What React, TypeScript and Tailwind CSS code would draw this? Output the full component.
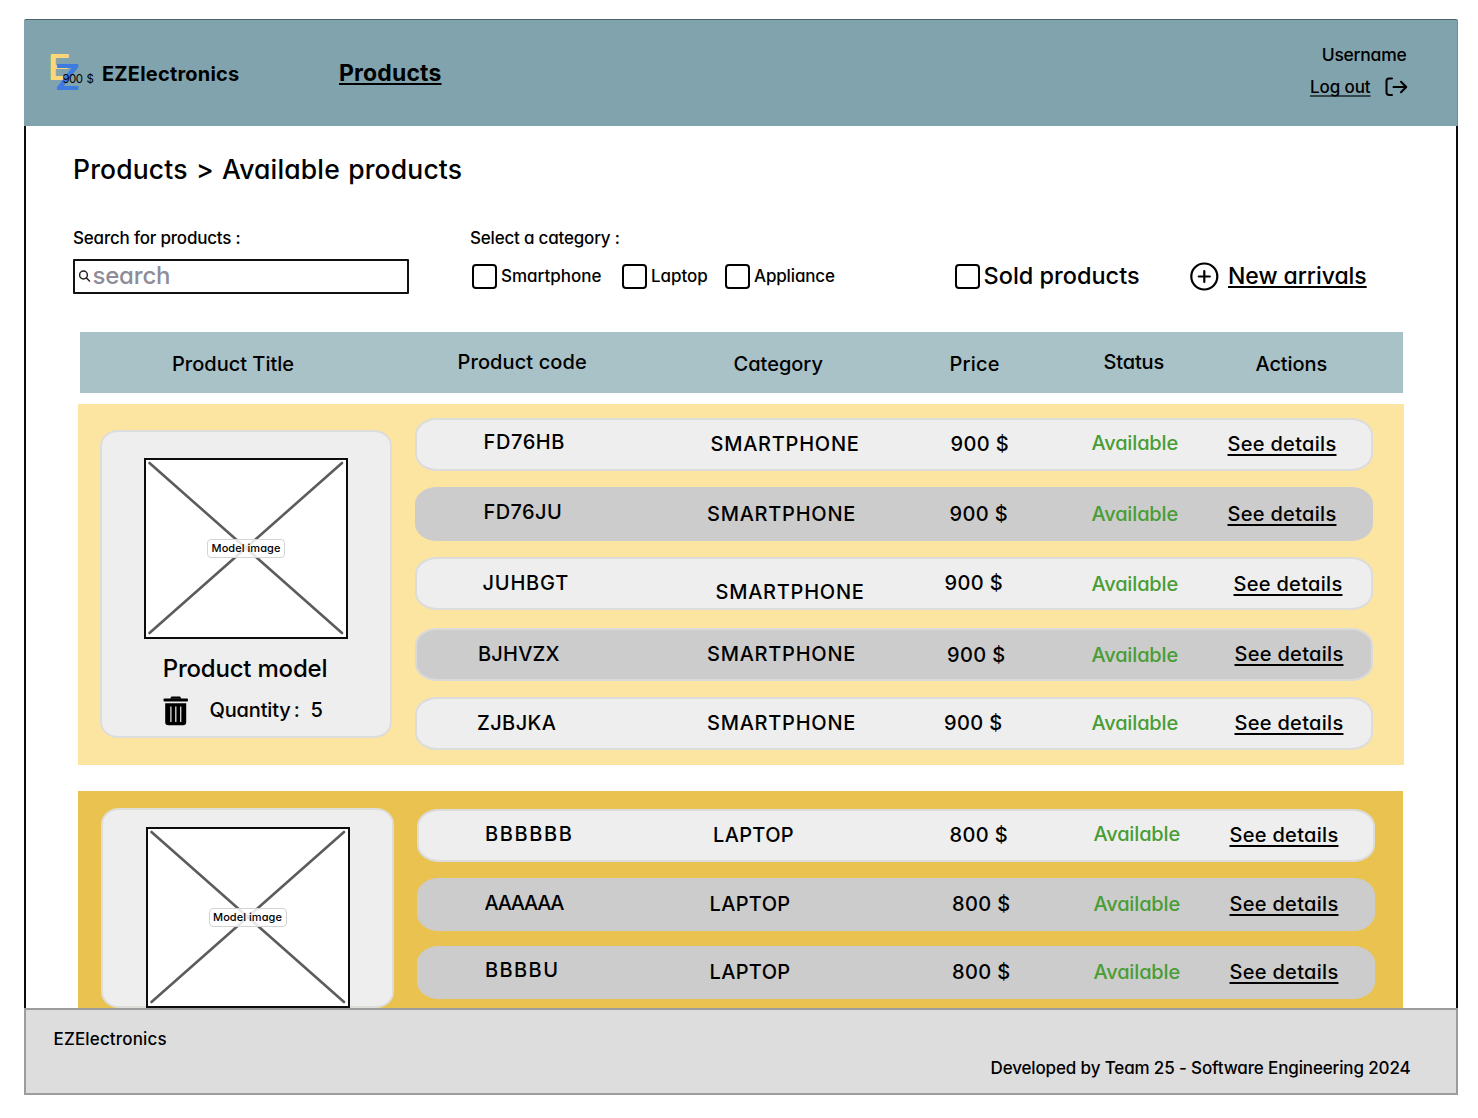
import React from "react";

type Cell = { text: string; cls: string };
type RowData = { box: string; cells: Cell[] };

const LIGHT = "bg-[#eeeeee] border-[#dcdcdc]";
const DARK = "bg-[#cccccc] border-[#cccccc]";
const DARK_EDGE = "bg-[#cccccc] border-[#dadad8]";

const COLUMNS = [
  "w-[230px]",
  "w-[234px]",
  "w-[149px]",
  "w-[136px]",
  "w-[138px]",
];

const STYLES = [
  "",
  "",
  "tracking-[0.4px]",
  "text-[#489d35] tracking-[-0.15px]",
  "underline decoration-2 underline-offset-[2.5px] [text-decoration-skip-ink:none] tracking-[0.3px]",
];

const PHONE = "SMARTPHONE";
const phoneRows: RowData[] = [
  {
    box: `${LIGHT} h-[53px] mb-[16px]`,
    cells: [
      { text: "FD76HB", cls: "pl-[7px] pt-[10px] tracking-[0.6px]" },
      { text: PHONE, cls: "pl-[4px] pt-[12px] tracking-[0.75px]" },
      { text: "900 $", cls: "pl-[10px] pt-[12px]" },
      { text: "Available", cls: "pl-[2px] pt-[10.5px]" },
      { text: "See details", cls: "pl-[2px] pt-[12px]" },
    ],
  },
  {
    box: `${DARK} h-[54px] mb-[16px]`,
    cells: [
      { text: "FD76JU", cls: "pl-[7px] pt-[10.5px] tracking-[0.4px]" },
      { text: PHONE, cls: "pl-[0.5px] pt-[12.5px] tracking-[0.75px]" },
      { text: "900 $", cls: "pl-[9px] pt-[12.5px]" },
      { text: "Available", cls: "pl-[2px] pt-[12.5px]" },
      { text: "See details", cls: "pl-[2px] pt-[12.5px]" },
    ],
  },
  {
    box: `${LIGHT} h-[53px] mb-[18px]`,
    cells: [
      { text: "JUHBGT", cls: "pl-[6px] pt-[12px] tracking-[0.8px]" },
      { text: PHONE, cls: "pl-[9px] pt-[21px] tracking-[0.75px]" },
      { text: "900 $", cls: "pl-[4px] pt-[12px]" },
      { text: "Available", cls: "pl-[2px] pt-[12.5px]" },
      { text: "See details", cls: "pl-[8px] pt-[12.5px]" },
    ],
  },
  {
    box: `${DARK_EDGE} h-[53px] mb-[16px]`,
    cells: [
      { text: "BJHVZX", cls: "pl-[1.5px] pt-[12px] tracking-[0.2px]" },
      { text: PHONE, cls: "pl-[0.5px] pt-[12px] tracking-[0.75px]" },
      { text: "900 $", cls: "pl-[6.5px] pt-[13px]" },
      { text: "Available", cls: "pl-[2px] pt-[13px]" },
      { text: "See details", cls: "pl-[9px] pt-[12px]" },
    ],
  },
  {
    box: `${LIGHT} h-[53px]`,
    cells: [
      { text: "ZJBJKA", cls: "pl-[0.5px] pt-[12px] tracking-[0.4px]" },
      { text: PHONE, cls: "pl-[0.5px] pt-[12px] tracking-[0.75px]" },
      { text: "900 $", cls: "pl-[3.5px] pt-[12px]" },
      { text: "Available", cls: "pl-[2px] pt-[12px]" },
      { text: "See details", cls: "pl-[9px] pt-[12px]" },
    ],
  },
];

const laptopRows: RowData[] = [
  {
    box: `${LIGHT} h-[53px] mb-[16px]`,
    cells: [
      { text: "BBBBBB", cls: "pl-[6.5px] pt-[11px] tracking-[1.6px]" },
      { text: "LAPTOP", cls: "pl-[4.5px] pt-[12px] tracking-[0.35px]" },
      { text: "800 $", cls: "pl-[7px] pt-[12px]" },
      { text: "Available", cls: "pl-[2px] pt-[11px]" },
      { text: "See details", cls: "pl-[2px] pt-[12.5px]" },
    ],
  },
  {
    box: `${DARK} h-[53px] mb-[15px]`,
    cells: [
      { text: "AAAAAA", cls: "pl-[6px] pt-[11px] tracking-[-1.3px]" },
      { text: "LAPTOP", cls: "pl-[1px] pt-[12.5px] tracking-[0.35px]" },
      { text: "800 $", cls: "pl-[9.5px] pt-[12.5px]" },
      { text: "Available", cls: "pl-[2px] pt-[12.5px]" },
      { text: "See details", cls: "pl-[2px] pt-[12.5px]" },
    ],
  },
  {
    box: `${DARK} h-[53px]`,
    cells: [
      { text: "BBBBU", cls: "pl-[6.5px] pt-[10px] tracking-[1.4px]" },
      { text: "LAPTOP", cls: "pl-[1px] pt-[12px] tracking-[0.35px]" },
      { text: "800 $", cls: "pl-[9.5px] pt-[12px]" },
      { text: "Available", cls: "pl-[2px] pt-[12px]" },
      { text: "See details", cls: "pl-[2px] pt-[12px]" },
    ],
  },
];

function Row({ row }: { row: RowData }) {
  return (
    <div
      className={`flex w-[957.5px] items-start rounded-[22px/17px] border-2 pl-[59.5px] text-[20px] leading-[24px] ${row.box}`}
    >
      {row.cells.map((c, i) => (
        <div key={i} className={`shrink-0 ${COLUMNS[i]} ${c.cls}`}>
          <span className={STYLES[i]}>{c.text}</span>
        </div>
      ))}
    </div>
  );
}

function ModelImage() {
  return (
    <div className="relative flex h-[181px] w-[204px] shrink-0 items-center justify-center border-2 border-[#0c0c0c] bg-white">
      <svg className="absolute inset-0 h-full w-full" viewBox="0 0 200 177" fill="none" stroke="#5c5c5c" strokeWidth="2.6" strokeLinecap="round">
        <path d="M3.5 3 196 173M196 3 3.5 173" />
      </svg>
      <span className="relative flex h-[19px] w-[78px] items-center justify-center rounded-[4px] border border-[#d4d4d4] bg-white/85 text-[11px] font-medium tracking-[0.05px]">
        Model image
      </span>
    </div>
  );
}

function Check({ label, cls, text }: { label: string; cls: string; text: string }) {
  return (
    <label className={`flex shrink-0 items-center ${cls}`}>
      <span className="h-[25px] w-[25px] shrink-0 rounded-[4px] border-[2.5px] border-black bg-white" />
      <span className={text}>{label}</span>
    </label>
  );
}

export default function App() {
  return (
    <div className="h-[1118px] w-[1478px] overflow-hidden bg-white pl-[24px] pt-[19px] font-['Inter','Liberation_Sans',sans-serif] font-[450] whitespace-nowrap text-black [font-feature-settings:'cv11']">
      <div className="flex h-[1076px] w-[1434px] flex-col">
        <header className="flex h-[107px] shrink-0 items-start rounded-t-[2px] border-t border-r border-t-[#4c646a] border-r-[#6d8c94] bg-[#80a3ad]">
          <div className="relative ml-[24px] mt-[30px] h-[44px] w-[54px] shrink-0">
            <svg className="overflow-visible" width="54" height="44" viewBox="0 0 54 44" strokeLinejoin="round" fontFamily="Inter" fontSize="32" fontWeight="350">
              <text x="0.3" y="28.5" textLength="22" lengthAdjust="spacingAndGlyphs" fill="#fbd77a" stroke="#fbd77a" strokeWidth="2">E</text>
              <text x="7.5" y="39" textLength="24" lengthAdjust="spacingAndGlyphs" fill="#3d7be0" stroke="#3d7be0" strokeWidth="2">Z</text>
            </svg>
            <span className="absolute left-[14.5px] top-[21px] text-[11.5px] font-normal leading-[16px] tracking-[-0.6px] [word-spacing:1.5px]">900 $</span>
          </div>
          <div className="mt-[42px] w-[237px] text-[20px] font-bold leading-[24px] tracking-[0.2px]">EZElectronics</div>
          <a className="mt-[38.5px] text-[23px] font-bold leading-[28px] tracking-[0.15px] underline decoration-2 underline-offset-[2px] [text-decoration-skip-ink:none]">
            Products
          </a>
          <div className="ml-auto mr-[49.5px] mt-[23px] flex flex-col items-end">
            <span className="mr-[1px] text-[17.5px] leading-[24px] tracking-[-0.25px]">Username</span>
            <div className="mt-[8px] flex items-center">
              <span className="text-[17px] leading-[24px] tracking-[-0.1px] underline decoration-[#33444a] decoration-[1.5px] underline-offset-[2px] [text-decoration-skip-ink:none]">Log out</span>
              <svg className="ml-[14px]" width="23" height="20" viewBox="0 0 23 20" fill="none" stroke="black" strokeWidth="2" strokeLinecap="round" strokeLinejoin="round">
                <path d="M7 1.5H4.2Q1.5 1.5 1.5 4.2V15.3Q1.5 18 4.2 18H7M8.5 10H21M16 4.8 21.3 10 16 15.2" />
              </svg>
            </div>
          </div>
        </header>

        <main className="h-[882px] shrink-0 overflow-hidden border-x-2 border-[#0c0c0c]">
          <h1 className="ml-[47px] mt-[27px] text-[26.5px] leading-[32px] tracking-[0.16px] [word-spacing:1px]">Products &gt; Available products</h1>

          <div className="mt-[43px] flex h-[20px] text-[17px] leading-[20px]">
            <span className="ml-[47px] w-[397px] tracking-[-0.2px]">Search for products :</span>
            <span className="tracking-[-0.2px]">Select a category :</span>
          </div>

          <div className="mt-[10px] flex h-[36px] items-center">
            <div className="ml-[47px] flex h-[35px] w-[336px] shrink-0 items-center rounded-[1px] border-2 border-[#111] pl-[4px]">
              <svg width="12" height="12" viewBox="0 0 12 12" fill="none" stroke="#222" strokeWidth="1.5" strokeLinecap="round">
                <circle cx="4.5" cy="5" r="3.9" />
                <path d="m7.5 8 3 3" />
              </svg>
              <span className="ml-[1.5px] text-[24px] leading-[28px] tracking-[-0.2px] text-[#8e8c97]">search</span>
            </div>
            <Check label="Smartphone" cls="ml-[63px] w-[150px]" text="ml-[4px] mt-[1px] text-[17px]" />
            <Check label="Laptop" cls="w-[103px]" text="ml-[4px] mt-[1px] text-[17px] tracking-[-0.05px]" />
            <Check label="Appliance" cls="w-[230px]" text="ml-[4px] mt-[1px] text-[17px] tracking-[-0.15px]" />
            <Check label="Sold products" cls="w-[235px]" text="ml-[3.5px] text-[23.5px]" />
            <svg className="shrink-0" width="29" height="29" viewBox="0 0 29 29" fill="none" stroke="black" strokeWidth="2.2" strokeLinecap="round">
              <circle cx="14.3" cy="14.5" r="13" />
              <path d="M14.3 9v11M8.8 14.5h11" />
            </svg>
            <span className="ml-[9px] text-[23px] leading-[28px] tracking-[-0.05px] underline decoration-2 underline-offset-[2px] [text-decoration-skip-ink:none]">New arrivals</span>
          </div>

          <div className="ml-[54px] mt-[38px] flex h-[61px] w-[1322.5px] bg-[#a8c2c7] pl-[92px] text-[20px] leading-[24px]">
            <span className="w-[285.5px] pt-[20px]">Product Title</span>
            <span className="w-[276px] pt-[18px] tracking-[0.1px]">Product code</span>
            <span className="w-[216px] pt-[20px]">Category</span>
            <span className="w-[154px] pt-[20px] tracking-[0.2px]">Price</span>
            <span className="w-[152px] pt-[18px] tracking-[-0.15px]">Status</span>
            <span className="pt-[20px] tracking-[-0.1px]">Actions</span>
          </div>

          <section className="ml-[52px] mt-[10.5px] flex h-[361px] w-[1326px] items-start bg-[#fce4a1]">
            <div className="ml-[22px] mt-[26px] flex h-[308px] w-[292px] shrink-0 flex-col items-center rounded-[18px/16px] border-2 border-[#dcdcdc] bg-[#eeeeee] pt-[26px]">
              <ModelImage />
              <div className="-ml-[2px] mt-[15px] text-[24px] leading-[30px] tracking-[-0.2px]">Product model</div>
              <div className="mt-[12px] flex h-[30px] w-[166px] items-center text-[20px]">
                <svg width="26" height="30" viewBox="0 0 26 30" className="shrink-0">
                  <rect x="0.5" y="2.4" width="24.5" height="3" rx="1" fill="black" />
                  <path d="M7 2.8 8.5 .5h8.5L18.5 2.8Z" fill="black" />
                  <path d="M2.2 7.2h21V26q0 3.2-3.2 3.2H5.4q-3.2 0-3.2-3.2Z" fill="black" />
                  <path d="M7.9 10.5V26M12.8 10.5V26M17.7 10.5V26" stroke="#ddd" strokeWidth="1.3" />
                </svg>
                <span className="-mt-[2px] ml-[20.5px] w-[101px] shrink-0 tracking-[-0.15px] [word-spacing:-2px]">Quantity :</span>
                <span className="-mt-[2px]">5</span>
              </div>
            </div>
            <div className="ml-[23px] mt-[14.5px]">
              {phoneRows.map((r, i) => (
                <Row key={i} row={r} />
              ))}
            </div>
          </section>

          <section className="ml-[52px] mt-[26px] flex h-[217.5px] w-[1325px] items-start bg-[#eac250]">
            <div className="ml-[23px] mt-[17px] flex h-[200px] w-[293px] shrink-0 flex-col items-center rounded-[18px/16px] border-2 border-[#dfddd8] bg-[#eeeeee] pt-[17px]">
              <ModelImage />
            </div>
            <div className="ml-[23px] mt-[18px]">
              {laptopRows.map((r, i) => (
                <Row key={i} row={r} />
              ))}
            </div>
          </section>
        </main>

        <footer className="flex h-[87px] shrink-0 flex-col border-2 border-[#9c9c9c] bg-[#dddddd] text-[17px] leading-[20px]">
          <span className="ml-[27.5px] mt-[19px] tracking-[0.15px]">EZElectronics</span>
          <span className="ml-auto mr-[45.5px] mt-[9px] tracking-[-0.14px]">Developed by Team 25 - Software Engineering 2024</span>
        </footer>
      </div>
    </div>
  );
}
